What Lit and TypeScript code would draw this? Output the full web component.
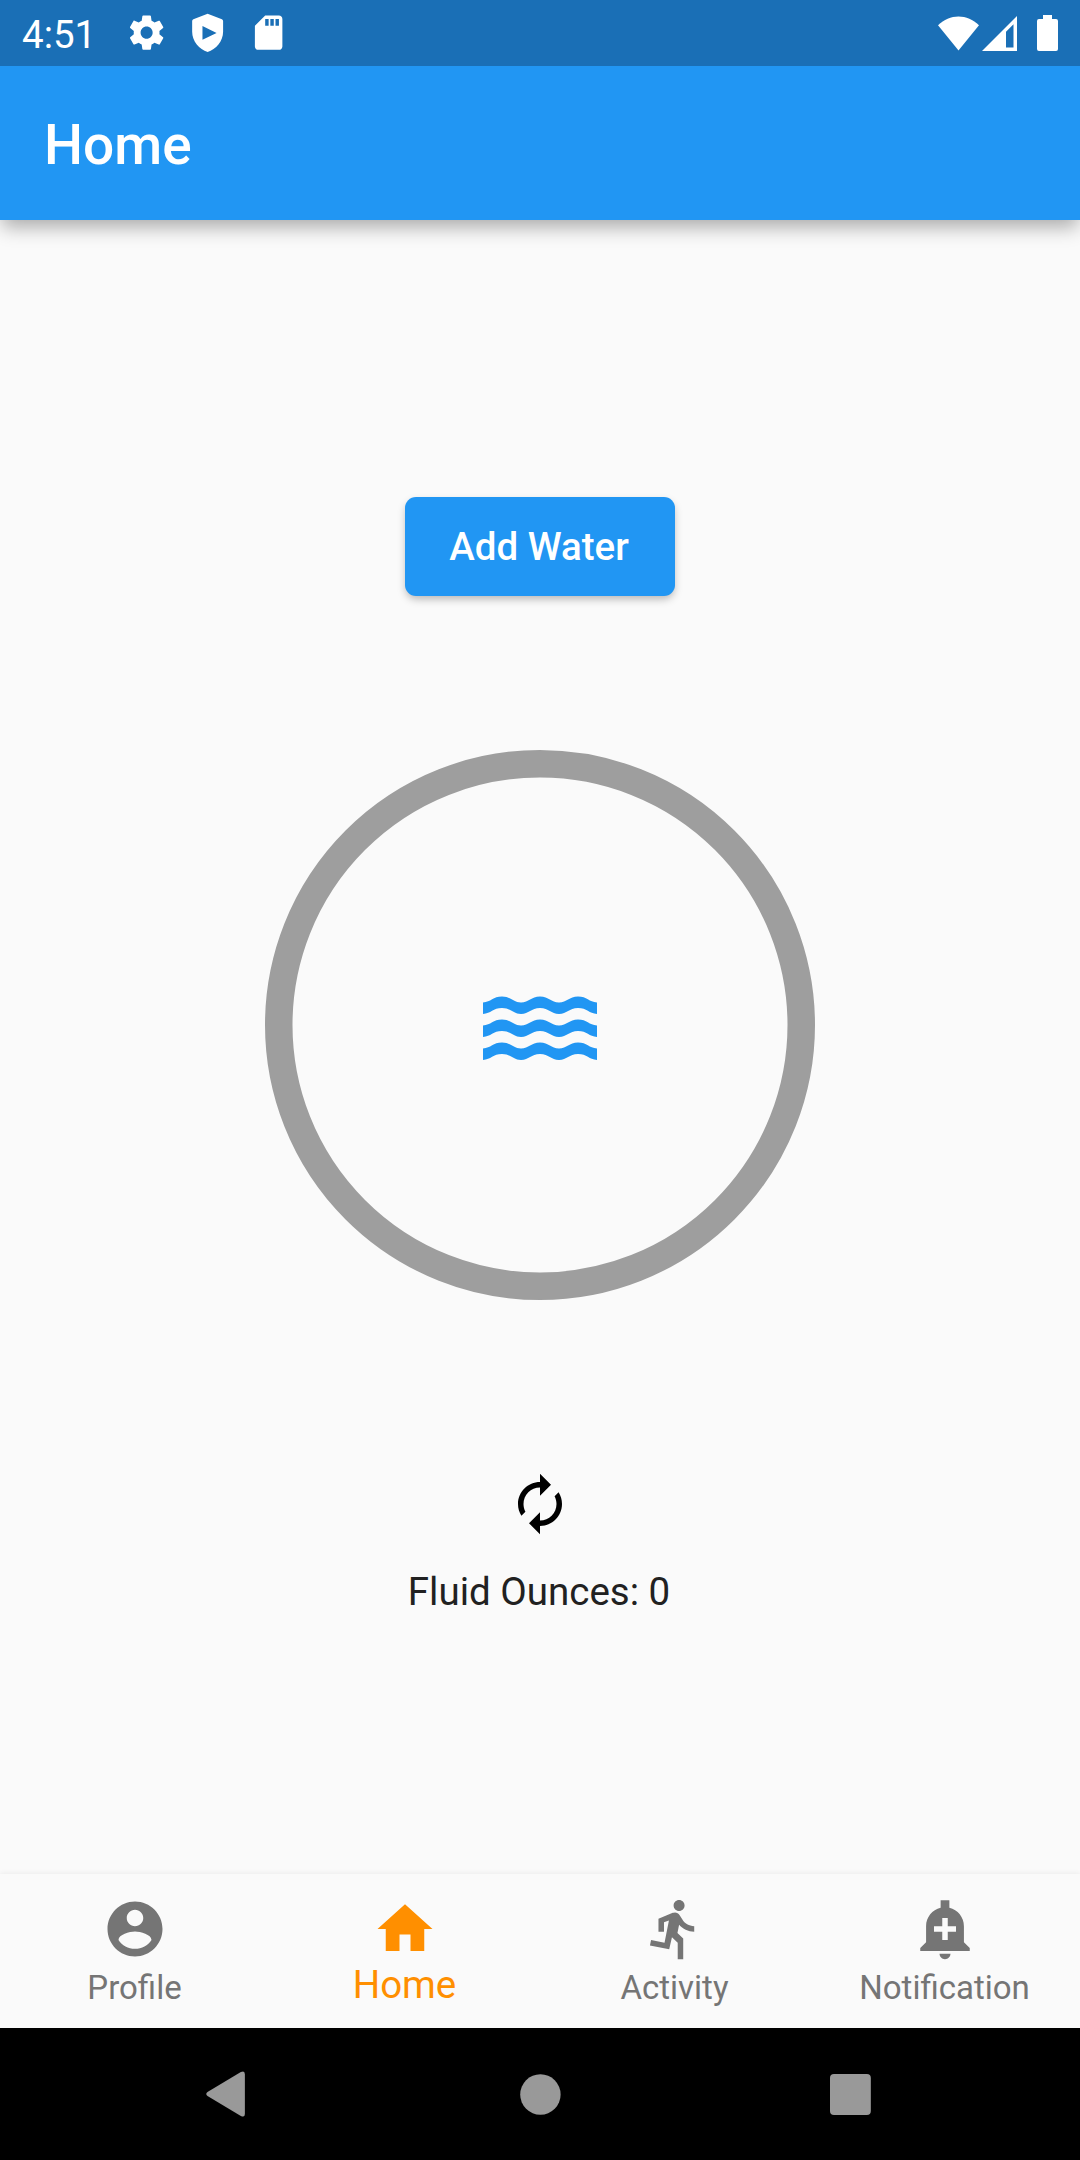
import { LitElement, html, css, svg } from "lit";
import { customElement, property, state } from "lit/decorators.js";
import { classMap } from "lit/directives/class-map.js";

const ICONS: Record<string, string> = {
  settings:
    "M19.43 12.98c.04-.32.07-.64.07-.98s-.03-.66-.07-.98l2.11-1.65c.19-.15.24-.42.12-.64l-2-3.46c-.12-.22-.39-.3-.61-.22l-2.49 1c-.52-.4-1.08-.73-1.69-.98l-.38-2.65C14.46 2.18 14.25 2 14 2h-4c-.25 0-.46.18-.49.42l-.38 2.65c-.61.25-1.17.59-1.69.98l-2.49-1c-.23-.09-.49 0-.61.22l-2 3.46c-.13.22-.07.49.12.64l2.11 1.65c-.04.32-.07.65-.07.98s.03.66.07.98l-2.11 1.65c-.19.15-.24.42-.12.64l2 3.46c.12.22.39.3.61.22l2.49-1c.52.4 1.08.73 1.69.98l.38 2.65c.03.24.24.42.49.42h4c.25 0 .46-.18.49-.42l.38-2.65c.61-.25 1.17-.59 1.69-.98l2.49 1c.23.09.49 0 .61-.22l2-3.46c.12-.22.07-.49-.12-.64l-2.11-1.65zM12 15.5c-1.93 0-3.5-1.57-3.5-3.5s1.57-3.5 3.5-3.5 3.5 1.57 3.5 3.5-1.57 3.5-3.5 3.5z",
  shield:
    "M12 1L3.700 4.200Q3 4.500 3 5.200V11.500c0 5.500 4.200 10.300 9 11.700 4.800-1.400 9-6.200 9-11.700V5.200Q21 4.500 20.300 4.200zM9 8.100l8.200 4.050L9 16.200z",
  sd: "M18 2h-8L4.020 8 4 20c0 1.100.9 2 2 2h12c1.100 0 2-.9 2-2V4c0-1.100-.9-2-2-2zm-6 6h-2V4h2v4zm3 0h-2V4h2v4zm3 0h-2V4h2v4z",
  account:
    "M12 2C6.480 2 2 6.480 2 12s4.480 10 10 10 10-4.480 10-10S17.520 2 12 2zm0 3c1.660 0 3 1.340 3 3s-1.340 3-3 3-3-1.340-3-3 1.340-3 3-3zm0 14.200c-2.500 0-4.710-1.280-6-3.220.03-1.990 4-3.080 6-3.080 1.990 0 5.970 1.090 6 3.080-1.290 1.940-3.500 3.220-6 3.220z",
  home: "M10 20v-6h4v6h5v-8h3L12 3 2 12h3v8z",
  run: "M13.490 5.480c1.100 0 2-.9 2-2s-.9-2-2-2-2 .9-2 2 .9 2 2 2zm-3.600 13.900l1-4.400 2.100 2v6h2v-7.500l-2.100-2 .6-3c1.300 1.500 3.300 2.500 5.500 2.500v-2c-1.900 0-3.500-1-4.300-2.400l-1-1.600c-.4-.6-1-1-1.700-1-.3 0-.5.1-.8.1l-5.200 2.200v4.700h2v-3.400l1.800-.7-1.600 8.100-4.900-1-.4 2 7 1.400z",
  bell: "M10.010 21.010c0 1.100.89 1.990 1.990 1.990s1.990-.89 1.990-1.990h-3.980zm8.870-4.190V11c0-3.250-2.250-5.970-5.290-6.690V1.500h-3.180v2.810C7.370 5.030 5.120 7.750 5.120 11v5.820L3 18.940V20h18v-1.060l-2.120-2.120zM16 13.010h-3v3h-2v-3H8V11h3V8h2v3h3v2.010z",
  renew:
    "M12 6v3l4-4-4-4v3c-4.420 0-8 3.580-8 8 0 1.570.46 3.030 1.240 4.260L6.700 14.800c-.45-.83-.7-1.790-.7-2.800 0-3.310 2.690-6 6-6zm6.760 1.740L17.300 9.200c.44.84.7 1.790.7 2.800 0 3.310-2.690 6-6 6v-3l-4 4 4 4v-3c4.420 0 8-3.580 8-8 0-1.570-.46-3.030-1.240-4.260z",
};

@customElement("md-icon")
class MdIcon extends LitElement {
  @property() name = "";

  static styles = css`
    :host {
      display: block;
      width: 66px;
      height: 66px;
      flex: none;
    }
    .glyph {
      display: block;
      width: 100%;
      height: 100%;
      fill: currentColor;
      fill-rule: evenodd;
    }
  `;

  render() {
    return html`<svg class="glyph" viewBox="0 0 24 24"><path d=${ICONS[this.name]} /></svg>`;
  }
}

@customElement("status-bar")
class StatusBar extends LitElement {
  static styles = css`
    :host {
      display: flex;
      align-items: center;
      justify-content: space-between;
      box-sizing: border-box;
      position: relative;
      z-index: 1;
      height: 66px;
      padding: 0 22px;
      background: #1a6fb6;
      color: #fff;
      font-size: 38.5px;
    }
    .group {
      display: flex;
      align-items: center;
      height: 66px;
    }
    .time {
      width: 75px;
      padding-top: 2px;
      white-space: nowrap;
    }
    .notices {
      display: flex;
      gap: 20px;
      margin-left: 28.5px;
    }
    .notice {
      width: 41.25px;
      height: 41.25px;
    }
    .meter {
      display: block;
      fill: #fff;
    }
    .signal {
      margin-left: 3px;
    }
    .battery {
      margin-left: 20px;
    }
  `;

  render() {
    return html`
      <div class="group">
        <span class="time">4:51</span>
        <div class="notices">
          <md-icon class="notice" name="settings"></md-icon>
          <md-icon class="notice" name="shield"></md-icon>
          <md-icon class="notice" name="sd"></md-icon>
        </div>
      </div>
      <div class="group">
        <svg class="meter wifi" width="41" height="35" viewBox="0 0 41 35">
          <path d="M20.500 34.500 0 9.200C6 3.500 13 .5 20.500.5S35 3.500 41 9.200z" />
        </svg>
        <svg class="meter signal" width="35" height="35" viewBox="0 0 35 35">
          <path fill-rule="evenodd" d="M35 0v35H0zM31.500 8.200 24 15.700V31.500h7.500z" />
        </svg>
        <svg class="meter battery" width="21" height="36" viewBox="0 0 21 36">
          <path d="M6 0h9v4h4q2 0 2 2v28q0 2-2 2H2q-2 0-2-2V6q0-2 2-2h4z" />
        </svg>
      </div>
    `;
  }
}

@customElement("water-ring")
class WaterRing extends LitElement {
  static styles = css`
    :host {
      display: block;
    }
    .ring {
      display: block;
      fill: none;
      stroke: #9e9e9e;
      stroke-width: 27.5px;
    }
    .wave {
      fill: #2196f3;
      stroke: none;
    }
  `;

  private wave(y: number) {
    return svg`<path class="wave" transform="translate(218 ${y})" d="M0 6C8 5.500 10 0 19 0S30 6 38 6 48 0 57 0 68 6 76 6 86 0 95 0 106 5.500 114 6V17.500C106 17 104 11.500 95 11.500S84 17.500 76 17.500 66 11.500 57 11.500 46 17.500 38 17.500 28 11.500 19 11.500 8 17 0 17.500z" />`;
  }

  render() {
    return html`<svg class="ring" width="550" height="550" viewBox="0 0 550 550">
      <circle cx="275" cy="275" r="261.250" />
      ${[246.5, 269.5, 292.5].map((y) => this.wave(y))}
    </svg>`;
  }
}

@customElement("app-root")
class AppRoot extends LitElement {
  @state() private ounces = 0;
  @state() private tab = "Home";

  private tabs = [
    { label: "Profile", icon: "account" },
    { label: "Home", icon: "home" },
    { label: "Activity", icon: "run" },
    { label: "Notification", icon: "bell" },
  ];

  static styles = css`
    :host {
      display: flex;
      flex-direction: column;
      width: 1080px;
      height: 2160px;
      overflow: hidden;
      background: #fafafa;
      font-family: Roboto, "Noto Sans", sans-serif;
    }
    .appbar {
      display: flex;
      align-items: center;
      box-sizing: border-box;
      height: 154px;
      padding: 3px 44px 0;
      background: #2196f3;
      color: #fff;
      font-size: 55px;
      font-weight: 500;
      letter-spacing: 0;
      box-shadow: 0 9px 18px -2px rgba(0, 0, 0, 0.32);
    }
    .body {
      display: flex;
      flex-direction: column;
      align-items: center;
      flex: 1;
      padding-top: 277px;
    }
    .add {
      box-sizing: border-box;
      width: 270px;
      height: 99px;
      padding: 0 2px 0 0;
      border: 0;
      border-radius: 11px;
      background: #2196f3;
      color: #fff;
      font: 500 38.5px Roboto, sans-serif;
      letter-spacing: 0;
      box-shadow: 0 4px 8px -1px rgba(0, 0, 0, 0.28);
    }
    .ring {
      margin-top: 154px;
    }
    .reset {
      margin-top: 171px;
      color: #000;
    }
    .total {
      margin-top: 32px;
      padding-right: 2px;
      color: #212121;
      font-size: 38.5px;
      line-height: 45px;
    }
    .tabs {
      display: grid;
      grid-template-columns: repeat(4, 1fr);
      height: 154px;
      background: #fafafa;
      box-shadow: 0 -1px 5px rgba(0, 0, 0, 0.06);
    }
    .tab {
      display: flex;
      flex-direction: column;
      align-items: center;
      padding-top: 22px;
      color: #757575;
    }
    .label {
      font-size: 33px;
      line-height: 38px;
      margin-top: 7px;
      padding-right: 1px;
    }
    .active {
      color: #ff8f00;
    }
    .active .label {
      font-size: 38.5px;
      line-height: 45px;
      margin-top: 0;
    }
    .system {
      display: flex;
      align-items: center;
      box-sizing: border-box;
      height: 132px;
      padding: 0 209px 0 206px;
      background: #000;
    }
    .key {
      display: block;
      fill: #999;
    }
    .home-key {
      margin: 0 269.5px 0 275px;
    }
  `;

  render() {
    return html`
      <status-bar></status-bar>
      <header class="appbar">${this.tab}</header>
      <main class="body">
        <button class="add" @click=${() => (this.ounces += 8)}>Add Water</button>
        <water-ring class="ring"></water-ring>
        <md-icon class="reset" name="renew" @click=${() => (this.ounces = 0)}></md-icon>
        <div class="total">Fluid Ounces: ${this.ounces}</div>
      </main>
      <nav class="tabs">
        ${this.tabs.map(
          (t) => html`<div
            class=${classMap({ tab: true, active: t.label === this.tab })}
            @click=${() => (this.tab = t.label)}
          >
            <md-icon name=${t.icon}></md-icon>
            <span class="label">${t.label}</span>
          </div>`
        )}
      </nav>
      <footer class="system">
        <svg class="key" width="39" height="46" viewBox="0 0 39 46">
          <path d="M1.500 21 35 1q4-2 4 2v40q0 4-4 2L1.500 25q-2.500-2 0-4z" />
        </svg>
        <svg class="key home-key" width="41" height="41" viewBox="0 0 41 41"><circle cx="20.500" cy="20.500" r="20.300" /></svg>
        <svg class="key" width="41" height="41" viewBox="0 0 41 41"><rect width="41" height="41" rx="4" /></svg>
      </footer>
    `;
  }
}
